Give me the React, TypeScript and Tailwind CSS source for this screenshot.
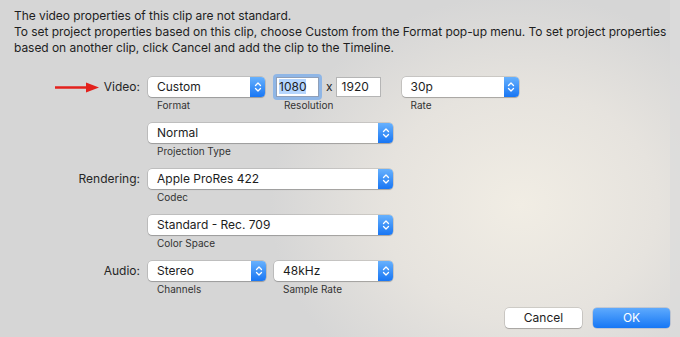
import React from 'react';

const FONT = 'Inter, "Liberation Sans", Arial, sans-serif';

function Stepper() {
    return (
        <div className="flex h-full w-[15px] shrink-0 items-center justify-center rounded-r-[4px] bg-[linear-gradient(#67b1fd,#1876f4)]">
            <svg width="8" height="12" viewBox="0 0 8 12" fill="none" stroke="white" strokeWidth="1.3" strokeLinecap="round" strokeLinejoin="round">
                <path d="M1.5 4.5 L4 2 L6.5 4.5" />
                <path d="M1.5 7.5 L4 10 L6.5 7.5" />
            </svg>
        </div>
    );
}

function Popup({ value, width }: { value: string; width: string }) {
    return (
        <div className={`flex h-[20px] items-stretch rounded-[4px] bg-white shadow-[0_0_0_0.5px_rgba(0,0,0,0.22),0_1px_1px_rgba(0,0,0,0.18)] ${width}`}>
            <span className="flex-1 pl-[9px] text-[12px] leading-[20px] text-[#1d1d1d]">{value}</span>
            <Stepper />
        </div>
    );
}

function Caption({ children, className = '' }: { children: React.ReactNode; className?: string }) {
    return <div className={`mt-[2px] pl-[9px] text-[10px] leading-[13px] text-[#333] ${className}`}>{children}</div>;
}

function Label({ children }: { children: React.ReactNode }) {
    return <div className="w-[126px] shrink-0 text-right text-[12px] leading-[20px] text-[#262626]">{children}</div>;
}

export default function App() {
    return (
        <div
            className="relative h-[337px] w-[680px] overflow-hidden bg-[radial-gradient(ellipse_250px_210px_at_520px_205px,#f1ede4_0%,#e6e3de_55%,#d6d6d6_100%)]"
            style={{ fontFamily: FONT }}
        >
            <div className="absolute right-0 top-0 h-full w-[10px] bg-[#dcdcdc]/70" />
            <div className="relative whitespace-nowrap pl-[14px] pt-[8px] text-[12px] leading-[16px] tracking-[-0.05px] text-[#1e1e1e]">
                <p>The video properties of this clip are not standard.</p>
                <p>
                    To set project properties based on this clip, choose Custom from the Format pop-up menu. To set project properties
                    <br />
                    based on another clip, click Cancel and add the clip to the Timeline.
                </p>
            </div>

            <div className="relative mt-[21px] pl-[14px]">
                {/* Video */}
                <div className="flex h-[46px] gap-[8px]">
                    <div className="relative">
                        <Label>Video:</Label>
                        <svg className="absolute left-[40px] top-[5px]" width="46" height="11" viewBox="0 0 46 11">
                            <line x1="1" y1="5.5" x2="34" y2="5.5" stroke="#e3211c" strokeWidth="2.5" />
                            <path d="M32 0.5 L45 5.5 L32 10.5 Z" fill="#e3211c" />
                        </svg>
                    </div>
                    <div>
                        <Popup value="Custom" width="w-[117px]" />
                        <Caption>Format</Caption>
                    </div>
                    <div>
                        <div className="flex items-center">
                            <div className="-my-[3px] rounded-[4px] bg-[#8fb6e6] p-[3px]">
                                <div className="h-[20px] w-[43px] border border-[#8f9fb8] bg-white pl-[2px] text-[12px] leading-[18px] text-[#1d1d1d]">
                                    <span className="bg-[#b5d5fd]">1080</span>
                                </div>
                            </div>
                            <span className="ml-[4px] mr-[3px] text-[12px] text-[#262626]">x</span>
                            <div className="h-[20px] w-[45px] border border-[#b5b5b5] bg-white pl-[5px] text-[12px] leading-[18px] text-[#1d1d1d]">1920</div>
                        </div>
                        <Caption className="pl-[11px]">Resolution</Caption>
                    </div>
                    <div className="ml-[13px]">
                        <Popup value="30p" width="w-[117px]" />
                        <Caption>Rate</Caption>
                    </div>
                </div>

                {/* Projection */}
                <div className="flex h-[46px] gap-[8px]">
                    <Label>{''}</Label>
                    <div>
                        <Popup value="Normal" width="w-[245px]" />
                        <Caption>Projection Type</Caption>
                    </div>
                </div>

                {/* Rendering */}
                <div className="flex h-[46px] gap-[8px]">
                    <Label>Rendering:</Label>
                    <div>
                        <Popup value="Apple ProRes 422" width="w-[245px]" />
                        <Caption>Codec</Caption>
                    </div>
                </div>

                <div className="flex h-[46px] gap-[8px]">
                    <Label>{''}</Label>
                    <div>
                        <Popup value="Standard - Rec. 709" width="w-[245px]" />
                        <Caption>Color Space</Caption>
                    </div>
                </div>

                {/* Audio */}
                <div className="flex h-[46px] gap-[8px]">
                    <Label>Audio:</Label>
                    <div>
                        <Popup value="Stereo" width="w-[118px]" />
                        <Caption>Channels</Caption>
                    </div>
                    <div>
                        <Popup value="48kHz" width="w-[119px]" />
                        <Caption>Sample Rate</Caption>
                    </div>
                </div>
            </div>

            <div className="absolute left-[505px] top-[308px] flex gap-[11px]">
                <button className="h-[20px] w-[77px] rounded-[4px] bg-white text-[12px] leading-[20px] text-[#1d1d1d] shadow-[0_0_0_0.5px_rgba(0,0,0,0.22),0_1px_1px_rgba(0,0,0,0.18)]">Cancel</button>
                <button className="h-[20px] w-[77px] rounded-[4px] bg-[linear-gradient(#5eaafd,#1677f5)] text-[12px] leading-[20px] text-white shadow-[0_0_0_0.5px_rgba(0,60,160,0.3)]">OK</button>
            </div>
        </div>
    );
}
